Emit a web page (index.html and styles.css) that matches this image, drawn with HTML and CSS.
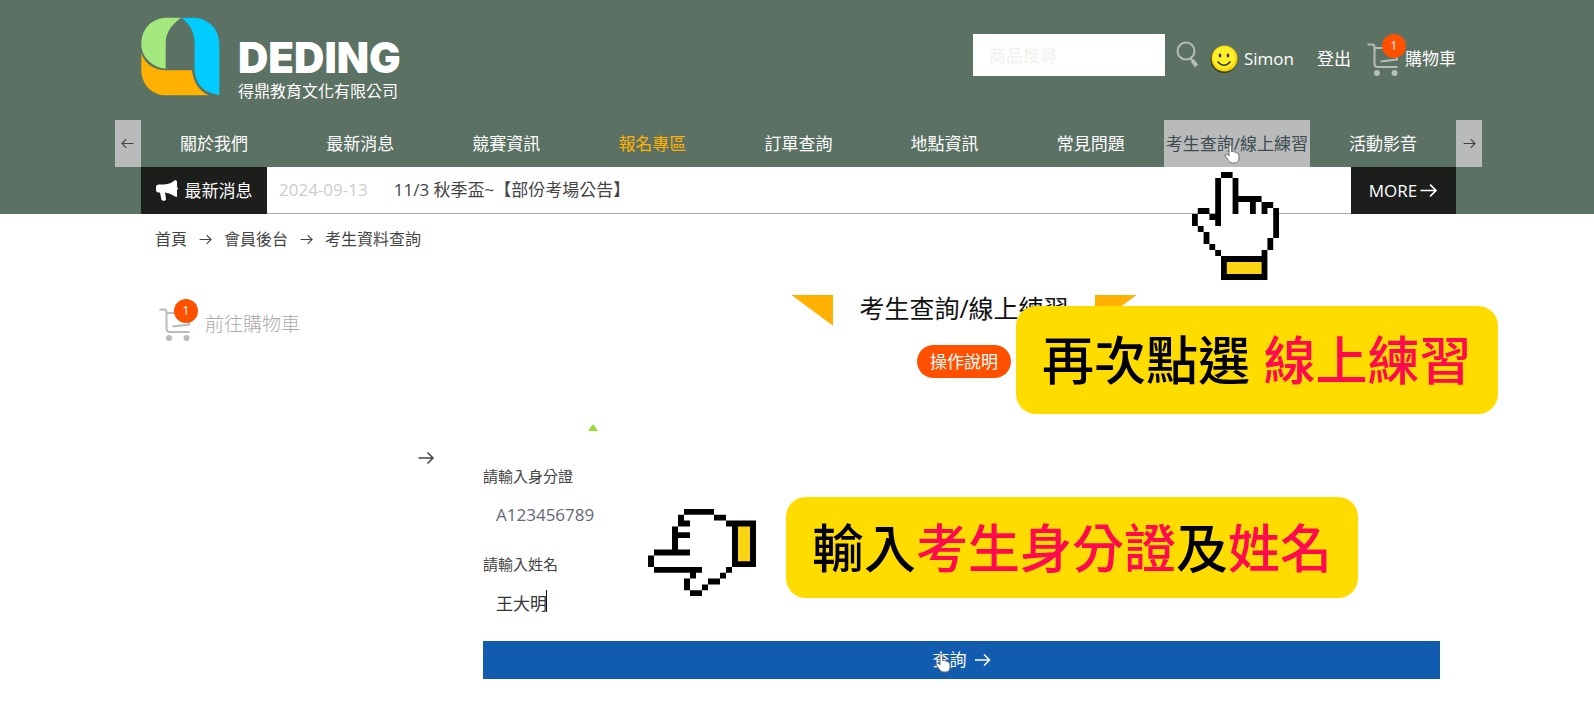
FILE: index.html
```html
<!DOCTYPE html>
<html lang="zh-Hant">
<head>
<meta charset="utf-8">
<meta name="viewport" content="width=device-width, initial-scale=1">
<title>考生查詢/線上練習</title>
<link rel="stylesheet" href="styles.css">
</head>
<body>
<svg class="defs" width="0" height="0" aria-hidden="true">
  <defs>
    <symbol id="arrow" viewBox="0 0 16 14"><path d="M0.5 7H15M9.5 1.5L15 7L9.5 12.5" fill="none" stroke="currentColor" stroke-width="1.5"/></symbol>
    <symbol id="cart" viewBox="0 0 32 34">
      <path d="M0.500 2.500H5Q7.500 2.500 7.500 5V21.500Q7.500 25 11 25H30.500M7.500 6H18M13.500 19.500L30 17.500V14" fill="none" stroke="currentColor" stroke-width="2"/>
      <circle cx="10" cy="31" r="3" fill="currentColor"/><circle cx="27.500" cy="31" r="3" fill="currentColor"/>
    </symbol>
    <symbol id="hand" viewBox="0 0 15 18" preserveAspectRatio="none">
      <path fill="#fff" d="M5 1H7V5H12V6H14V11H13V13H12V14H5V13H4V12H3V10H2V9H1V7H3V8H4V9H5Z"/>
      <path fill="#000" d="M5 0h2v1H5zM4 1h1v8H4zM7 1h1v6H7zM8 4h4v1H8zM10 5h1v2h-1zM12 5h2v1h-2zM12 6h1v1h-1zM14 6h1v5h-1zM13 11h1v2h-1zM12 13h1v1h-1zM1 6h2v1H1zM3 7h1v1H3zM0 7h1v2H0zM1 9h1v1H1zM2 10h1v2H2zM3 12h1v1H3zM4 13h1v1H4zM5 14h8v4H5z"/>
      <path fill="#fbd412" d="M6 15h6v2H6z"/>
    </symbol>
    <symbol id="pointer" viewBox="0 0 16 20"><path d="M5 11V2.500Q5 1 6.300 1T7.600 2.500V7.500Q10 7 10.300 8Q12.500 7.700 12.800 9Q15 8.800 15 11V14Q15 19 10.500 19H8.500Q6 19 4.500 16.500L1.300 12Q0.800 10.500 2.200 10.200Q3.500 10 5 12Z" fill="#fff" stroke="#6b6f72" stroke-width="1"/></symbol>
  </defs>
</svg>

<header class="site-header">
  <div class="container">
    <div class="top-row">
      <a class="brand" href="#">
        <svg class="brand-mark" viewBox="0 0 240 240" aria-hidden="true">
          <path fill="#a5e87d" d="M122 2H76C28 4 1 40 1 83C1 122 36 155 75 157V78C75 45 96 20 122 2Z"/>
          <path fill="#00ccff" d="M122 2H160C210 5 238 40 238 84V237C190 230 163 204 163 155V80C163 45 148 20 122 2Z"/>
          <path fill="#ffb000" d="M1 110C12 142 38 161 76 162H155C160 200 174 222 205 238H74C30 236 1 202 1 160Z"/>
        </svg>
        <span class="brand-text"><strong>DEDING</strong><span>得鼎教育文化有限公司</span></span>
      </a>
      <div class="tools">
        <form class="search">
          <input type="search" placeholder="商品搜尋" aria-label="商品搜尋">
          <button type="button" aria-label="搜尋">
            <svg width="22" height="27" viewBox="0 0 22 27"><circle cx="10" cy="10" r="8.500" fill="none" stroke="#b4bdb6" stroke-width="2"/><path d="M14.500 17.500L17 20" stroke="#b4bdb6" stroke-width="2"/><path d="M16.500 19.500L20.500 25" stroke="#b4bdb6" stroke-width="4"/></svg>
          </button>
        </form>
        <nav class="account" aria-label="會員">
          <a class="user" href="#">
            <svg width="29" height="30" viewBox="0 0 29 30" aria-hidden="true"><circle cx="14" cy="15.500" r="13.500" fill="#393c1c"/><circle cx="14.500" cy="14.500" r="13" fill="#f2d70c"/><circle cx="14" cy="13.500" r="11" fill="#fdf02b"/><ellipse cx="10" cy="11.500" rx="1.300" ry="2" fill="#3a3300"/><ellipse cx="18" cy="11.500" rx="1.300" ry="2" fill="#3a3300"/><path d="M7.500 17.500Q14 25 20.500 17.500" fill="none" stroke="#3a3300" stroke-width="1.500"/></svg>
            Simon</a>
          <a class="logout" href="#">登出</a>
          <a class="cart" href="#"><span class="cart-icon"><svg width="32" height="34" aria-hidden="true"><use href="#cart"/></svg><b>1</b></span>購物車</a>
        </nav>
      </div>
    </div>
    <nav class="main-nav" aria-label="主選單">
      <button class="nav-arrow prev" type="button" aria-label="上一個"><svg width="13" height="11"><use href="#arrow"/></svg></button>
      <a href="#">關於我們</a>
      <a href="#">最新消息</a>
      <a href="#">競賽資訊</a>
      <a class="accent" href="#">報名專區</a>
      <a href="#">訂單查詢</a>
      <a href="#">地點資訊</a>
      <a href="#">常見問題</a>
      <a class="active" href="#">考生查詢/線上練習<svg class="pointer" width="16" height="20" aria-hidden="true"><use href="#pointer"/></svg></a>
      <a href="#">活動影音</a>
      <button class="nav-arrow next" type="button" aria-label="下一個"><svg width="13" height="11"><use href="#arrow"/></svg></button>
    </nav>
    <div class="news">
      <div class="news-label">
        <svg width="23" height="22" viewBox="0 0 23 22" aria-hidden="true"><path fill="#fff" d="M19 0L21 1V7Q23 8.500 21 10V17L19 16.500Q14 13 9 12.500L10 19Q10 20.500 8 21L5.500 20L4 12.500H2Q0 12 0 10V7Q0 4.500 3 4.500H8Q15 4 19 0Z"/></svg>
        最新消息
      </div>
      <a class="news-item" href="#"><time datetime="2024-09-13">2024-09-13</time><span>11/3 秋季盃~【部份考場公告】</span></a>
      <a class="more" href="#">MORE<svg width="19" height="15" aria-hidden="true"><use href="#arrow"/></svg></a>
    </div>
  </div>
</header>

<main class="container page">
  <nav class="breadcrumb" aria-label="路徑">
    <a href="#">首頁</a><svg width="13" height="11"><use href="#arrow"/></svg>
    <a href="#">會員後台</a><svg width="13" height="11"><use href="#arrow"/></svg>
    <a href="#">考生資料查詢</a>
  </nav>
  <div class="columns">
    <aside class="side">
      <a class="cart side-cart" href="#"><span class="cart-icon"><svg width="32" height="34" aria-hidden="true"><use href="#cart"/></svg><b>1</b></span>前往購物車</a>
      <button class="side-arrow" type="button" aria-label="展開"><svg width="18" height="14"><use href="#arrow"/></svg></button>
    </aside>
    <section class="content">
      <div class="heading">
        <div class="title-row">
          <span class="corner left"></span>
          <h1>考生查詢/線上練習</h1>
          <span class="corner right"></span>
        </div>
        <button class="guide" type="button">操作說明</button>
      </div>
      <div class="marker"></div>
      <form class="query">
        <label for="idno">請輸入身分證</label>
        <input id="idno" type="text" value="A123456789">
        <label for="fullname">請輸入姓名</label>
        <div class="name-field"><input id="fullname" class="dark" type="text" value="王大明"><i class="caret"></i></div>
        <button class="submit" type="button">查詢<svg width="17" height="14" aria-hidden="true"><use href="#arrow"/></svg><svg class="pointer" width="16" height="20" aria-hidden="true"><use href="#pointer"/></svg></button>
      </form>
    </section>
  </div>
  <svg class="hand-up" width="87" height="108" aria-hidden="true"><use href="#hand"/></svg>
  <p class="callout first">再次點選 <em>線上練習</em></p>
  <svg class="hand-left" width="108" height="87" viewBox="0 0 108 87" aria-hidden="true"><use href="#hand" width="87" height="108" transform="translate(0 87) rotate(-90)"/></svg>
  <p class="callout second">輸入<em>考生身分證</em>及<em>姓名</em></p>
</main>
</body>
</html>
```
FILE: styles.css
```css
* { box-sizing: border-box; }

body {
  margin: 0;
  background: #fff;
  color: #444;
  font: 17px/24px "Open Sans", "Noto Sans CJK TC", sans-serif;
}

a { color: inherit; text-decoration: none; }
button { border: 0; padding: 0; background: none; color: inherit; font: inherit; }
input { border: 0; outline: 0; font: inherit; }
svg { display: block; flex: none; }
.defs { position: absolute; }

.container {
  max-width: 1318px;
  margin: 0 auto;
  padding-left: 3px;
}

/* Header */
.site-header { background: #5a7163; color: #fff; }

.top-row {
  display: flex;
  justify-content: space-between;
  align-items: flex-start;
  height: 120px;
}

.brand { display: flex; gap: 18px; padding-top: 17px; }
.brand-mark { width: 79px; height: 79px; }
.brand-text { display: flex; flex-direction: column; padding-top: 20px; font-size: 16px; line-height: 24px; }
.brand-text strong { font: 900 42px/42px Inter, sans-serif; }

.tools { display: flex; padding-top: 34px; }
.search { display: flex; align-items: flex-start; }
.search input { width: 192px; height: 42px; padding: 0 16px; background: #fff; }
.search input::placeholder { color: #f0f0ec; opacity: 1; }
.search button { margin: 7px 12px 0 11px; }

.account { display: flex; align-items: center; height: 50px; }
.user { display: flex; align-items: center; gap: 5px; }
.logout { margin: 0 16px 0 23px; }

.cart { display: flex; align-items: center; gap: 6px; }
.cart-icon { position: relative; color: #b4bdb6; }
.cart-icon b {
  position: absolute;
  top: -8px;
  left: 15px;
  width: 24px;
  height: 24px;
  border-radius: 50%;
  background: #ff5000;
  color: #fff;
  font-size: 12px;
  font-weight: 400;
  text-align: center;
}

.main-nav { position: relative; display: grid; grid-template-columns: repeat(9, 1fr); height: 47px; }
.main-nav a { display: flex; align-items: center; justify-content: center; white-space: nowrap; }
.main-nav .accent { color: #ffb000; }
.main-nav .active { position: relative; background: #b8bbb9; color: #3c4a50; }
.main-nav .pointer { position: absolute; top: 24px; left: 60px; }

.nav-arrow {
  position: absolute;
  top: 0;
  width: 26px;
  height: 47px;
  display: flex;
  align-items: center;
  justify-content: center;
  background: #b8bbb9;
  color: #444;
}
.prev { right: 100%; transform: scaleX(-1); }
.next { left: 100%; }

.news { display: flex; height: 47px; background: #fff; color: #444; border-bottom: 1px solid #aaa; }
.news-label,
.more { display: flex; align-items: center; justify-content: center; height: 47px; background: #1c1e1c; color: #fff; }
.news-label { width: 126px; gap: 6px; }
.news-item { flex: 1; display: flex; align-items: center; gap: 26px; padding-left: 12px; }
.news-item time { color: #ccc; }
.more { width: 105px; gap: 2px; }

/* Page */
.page { position: relative; }
.breadcrumb { display: flex; align-items: center; gap: 12px; height: 50px; padding-left: 14px; font-size: 16px; }
.columns { display: grid; grid-template-columns: 342px 1fr; padding: 26px 16px 0 0; }

.side { display: flex; flex-direction: column; align-items: flex-start; padding: 17px 48px 0 18px; }
.side-cart { gap: 14px; color: #aaa; font-size: 19px; font-weight: 300; }
.side .cart-icon { color: #bbb; }
.side-arrow { align-self: flex-end; margin-top: 110px; }

.heading { display: flex; flex-direction: column; align-items: center; padding-left: 5px; }
.title-row { display: flex; gap: 26px; height: 36px; }
.title-row h1 { margin: 0; color: #111; font-size: 25px; line-height: 36px; font-weight: 400; }
.corner { width: 42px; height: 31px; margin-top: 5px; background: #ffb000; }
.corner.left { clip-path: polygon(0 0, 100% 0, 100% 100%); }
.corner.right { clip-path: polygon(0 0, 100% 0, 0 100%); }

.guide { height: 33px; margin-top: 19px; padding: 0 13px; border-radius: 17px; background: #ff5000; color: #fff; }

.marker {
  width: 10px;
  height: 7px;
  margin: 46px 0 0 105px;
  background: #96dc32;
  clip-path: polygon(50% 0, 100% 100%, 0 100%);
}

.query { display: flex; flex-direction: column; padding-top: 35px; }
.query label { font-size: 15px; line-height: 20px; }
.query input { width: 100%; height: 40px; margin: 8px 0 20px; padding: 0 13px; background: transparent; color: #667; }
.query .dark { color: #333; margin-bottom: 19px; }
.name-field { position: relative; }
.caret { position: absolute; top: 16px; left: 63px; width: 1px; height: 22px; background: #111; }
.submit {
  position: relative;
  display: flex;
  align-items: center;
  justify-content: center;
  gap: 7px;
  height: 38px;
  background: #115cae;
  color: #fff;
}
.submit .pointer { position: absolute; top: 12px; left: calc(50% - 27px); }

/* Tutorial overlays */
.callout {
  position: absolute;
  margin: 0;
  padding: 0 26px;
  border-radius: 20px;
  background: #ffdc00;
  color: #000;
  font-size: 52px;
  font-weight: 500;
  white-space: nowrap;
}
.callout em { color: #ff0a50; font-style: normal; }
.first { top: 92px; left: 878px; line-height: 108px; }
.second { top: 283px; left: 648px; line-height: 101px; }
.hand-up { position: absolute; top: -42px; left: 1054px; }
.hand-left { position: absolute; top: 295px; left: 510px; }
```
